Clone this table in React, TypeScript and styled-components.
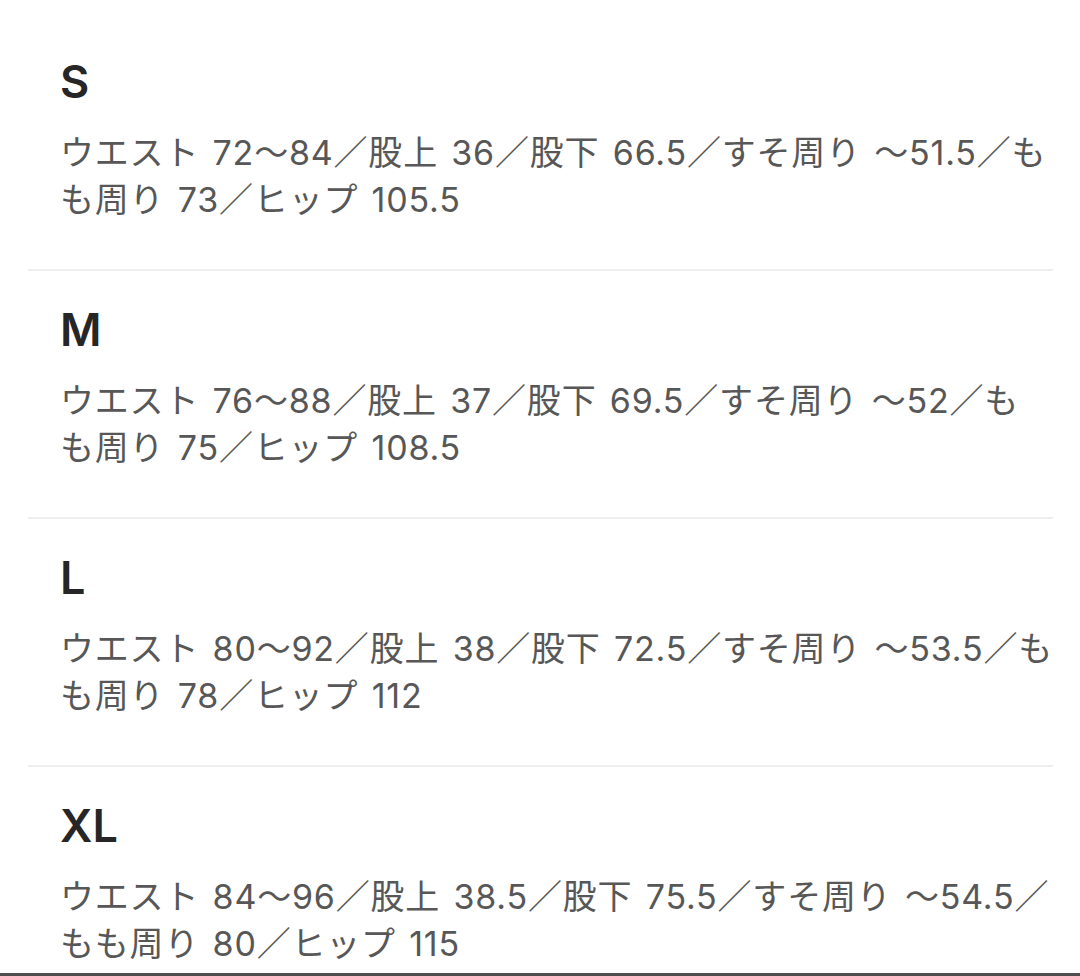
import styled, { createGlobalStyle } from "styled-components";

const sizes = [
  {
    label: "S",
    lines: [
      "ウエスト 72〜84／股上 36／股下 66.5／すそ周り 〜51.5／も",
      "も周り 73／ヒップ 105.5",
    ],
  },
  {
    label: "M",
    lines: [
      "ウエスト 76〜88／股上 37／股下 69.5／すそ周り 〜52／も",
      "も周り 75／ヒップ 108.5",
    ],
  },
  {
    label: "L",
    lines: [
      "ウエスト 80〜92／股上 38／股下 72.5／すそ周り 〜53.5／も",
      "も周り 78／ヒップ 112",
    ],
  },
  {
    label: "XL",
    lines: [
      "ウエスト 84〜96／股上 38.5／股下 75.5／すそ周り 〜54.5／",
      "もも周り 80／ヒップ 115",
    ],
  },
];

const App = () => {
  return (
    <>
      <GlobalStyle />
      <Page>
        <SizeList>
          {sizes.map((size) => (
            <SizeItem key={size.label}>
              <SizeLabel>{size.label}</SizeLabel>
              <SizeDetail>
                {size.lines.map((line) => (
                  <DetailLine key={line}>{line}</DetailLine>
                ))}
              </SizeDetail>
            </SizeItem>
          ))}
        </SizeList>
      </Page>
    </>
  );
};

const GlobalStyle = createGlobalStyle`
  * {
    box-sizing: border-box;
  }
  body {
    margin: 0;
    background: #ffffff;
    font-family: "Noto Sans CJK JP", "Liberation Sans", sans-serif;
  }
`;

const Page = styled.div`
  width: 1080px;
  height: 976px;
  overflow: hidden;
  background: #ffffff;
  border-bottom: 3px solid #4f4f4f;
  padding: 23px 27px 0 28px;
`;

const SizeList = styled.div`
  display: flex;
  flex-direction: column;
`;

const SizeItem = styled.div`
  display: flex;
  flex-direction: column;
  gap: 22px;
  padding: 34px 0 46px 32px;
  border-bottom: 2px solid #eeeeee;

  &:last-child {
    border-bottom: none;
  }
`;

const SizeLabel = styled.div`
  font-family: "Inter", "Liberation Sans", sans-serif;
  font-weight: 600;
  font-size: 45px;
  line-height: 50px;
  color: #262626;
`;

const SizeDetail = styled.div`
  display: flex;
  flex-direction: column;
  font-family: "Inter", "Noto Sans CJK JP", sans-serif;
  font-size: 34px;
  line-height: 47px;
  letter-spacing: 0.8px;
  word-spacing: 3px;
  color: #575757;
`;

const DetailLine = styled.div`
  white-space: nowrap;
`;

export default App;
